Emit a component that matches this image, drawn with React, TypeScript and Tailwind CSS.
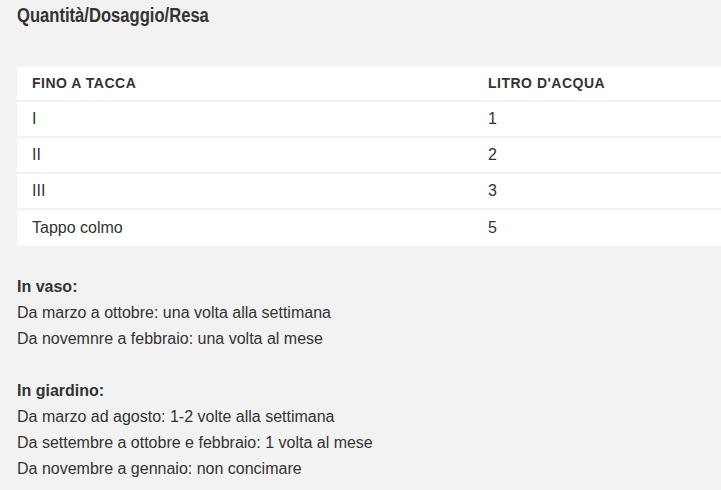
const rows = [
  { tacca: "I", litri: "1" },
  { tacca: "II", litri: "2" },
  { tacca: "III", litri: "3" },
  { tacca: "Tappo colmo", litri: "5" },
];

const vaso = [
  "Da marzo a ottobre: una volta alla settimana",
  "Da novemnre a febbraio: una volta al mese",
];

const giardino = [
  "Da marzo ad agosto: 1-2 volte alla settimana",
  "Da settembre a ottobre e febbraio: 1 volta al mese",
  "Da novembre a gennaio: non concimare",
];

export default function App() {
  return (
    <div className="min-h-[490px] w-[721px] overflow-hidden bg-[#f2f2f2] pl-[17px] text-[#333] font-['Liberation_Sans',Arial,sans-serif]">
      <h2 className="h-[30px] origin-left scale-x-[0.83] text-[20px] leading-[30px] font-bold whitespace-nowrap">
        Quantità/Dosaggio/Resa
      </h2>

      <div className="mt-[37px] w-[720px] bg-white">
        <div className="flex h-[35px] items-center border-b-2 border-[#f2f2f2] text-[14px] font-bold tracking-[0.5px]">
          <div className="w-[471px] pl-[15px]">FINO A TACCA</div>
          <div>LITRO D'ACQUA</div>
        </div>
        {rows.map((row, i) => (
          <div
            key={row.tacca}
            className={`flex h-[36px] items-center text-[16px] ${i < rows.length - 1 ? "border-b-2 border-[#f2f2f2]" : ""}`}
          >
            <div className="w-[471px] pl-[15px]">{row.tacca}</div>
            <div>{row.litri}</div>
          </div>
        ))}
      </div>

      <div className="mt-[28px] text-[16px] leading-[26px]">
        <p className="font-bold">In vaso:</p>
        {vaso.map((line) => (
          <p key={line}>{line}</p>
        ))}
        <p className="h-[26px]" />
        <p className="font-bold">In giardino:</p>
        {giardino.map((line) => (
          <p key={line}>{line}</p>
        ))}
      </div>
    </div>
  );
}
